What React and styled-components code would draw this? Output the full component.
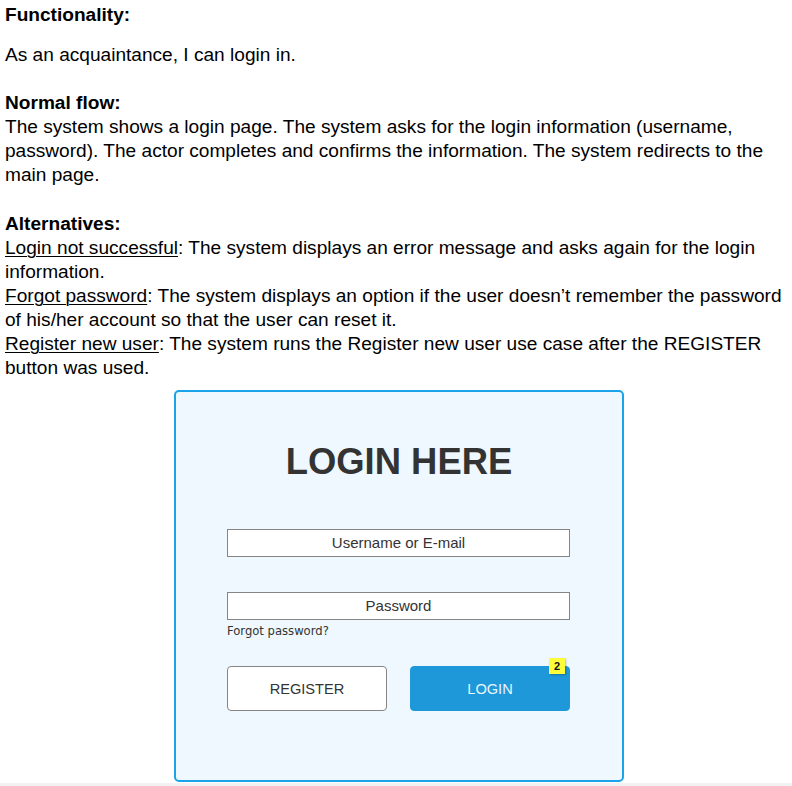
import React from "react";
import styled, { createGlobalStyle } from "styled-components";

const Global = createGlobalStyle`
  html, body { margin: 0; padding: 0; background: #fff; }
  body { font-family: "Liberation Sans", Arial, sans-serif; color: #000; }
`;

const Page = styled.div`
  width: 792px;
  height: 786px;
  display: flex;
  flex-direction: column;
  overflow: hidden;
`;

const Content = styled.div`
  padding: 3px 8px 0 5px;
  font-size: 19.1px;
  line-height: 24px;
`;

const Heading = styled.div`
  font-weight: bold;
  margin-top: ${(p) => p.$mt || 0}px;
`;

const Para = styled.div`
  margin-top: ${(p) => p.$mt || 0}px;
`;

const U = styled.span`
  text-decoration: underline;
  text-underline-offset: 2px;
  text-decoration-thickness: 1px;
`;

const CardWrap = styled.div`
  display: flex;
  padding-left: 169px;
  margin-top: 10px;
`;

const Card = styled.div`
  width: 450px;
  height: 392px;
  box-sizing: border-box;
  border: 2px solid #1aa3e8;
  border-radius: 5px;
  background: #eef8fe;
  display: flex;
  flex-direction: column;
  align-items: center;
  padding-top: 48px;
`;

const Title = styled.div`
  font-size: 36.4px;
  line-height: 44px;
  font-weight: bold;
  color: #333;
`;

const Form = styled.div`
  width: 343px;
  display: flex;
  flex-direction: column;
  margin-top: 45px;
  margin-left: -1px;
`;

const Field = styled.div`
  height: 28px;
  box-sizing: border-box;
  border: 1px solid #858585;
  background: #fff;
  display: flex;
  align-items: center;
  justify-content: center;
  font-size: 15px;
  color: #333;
  margin-top: ${(p) => p.$mt || 0}px;
`;

const Forgot = styled.div`
  font-family: "DejaVu Sans", Verdana, sans-serif;
  font-size: 11.6px;
  line-height: 15px;
  color: #333;
  margin-top: 4px;
`;

const Buttons = styled.div`
  display: flex;
  justify-content: space-between;
  margin-top: 27px;
`;

const Button = styled.div`
  position: relative;
  width: 160px;
  height: 45px;
  box-sizing: border-box;
  border-radius: 4px;
  display: flex;
  align-items: center;
  justify-content: center;
  font-size: 14.6px;
  border: 1px solid ${(p) => (p.$primary ? "#1e98d9" : "#858585")};
  background: ${(p) => (p.$primary ? "#1e98d9" : "#fff")};
  color: ${(p) => (p.$primary ? "#eaf6fd" : "#333")};
`;

const Badge = styled.div`
  position: absolute;
  top: -9px;
  right: 4px;
  width: 16px;
  height: 16px;
  background: #fdfd3a;
  color: #111;
  font-size: 11px;
  font-weight: bold;
  display: flex;
  align-items: center;
  justify-content: center;
  box-shadow: 1px 1px 2px rgba(0, 0, 0, 0.25);
`;

const Footer = styled.div`
  margin-top: auto;
  height: 3px;
  background: #f2f2f2;
`;

export default function App() {
  return (
    <>
      <Global />
      <Page>
        <Content>
          <Heading>Functionality:</Heading>
          <Para $mt={16}>As an acquaintance, I can login in.</Para>
          <Heading $mt={24}>Normal flow:</Heading>
          <Para>
            The system shows a login page. The system asks for the login information (username,
            password). The actor completes and confirms the information. The system redirects to the
            main page.
          </Para>
          <Heading $mt={25}>Alternatives:</Heading>
          <Para>
            <U>Login not successful</U>: The system displays an error message and asks again for the
            login information.
          </Para>
          <Para>
            <U>Forgot password</U>: The system displays an option if the user doesn’t remember the
            password of his/her account so that the user can reset it.
          </Para>
          <Para>
            <U>Register new user</U>: The system runs the Register new user use case after the
            REGISTER button was used.
          </Para>
          <CardWrap>
            <Card>
              <Title>LOGIN HERE</Title>
              <Form>
                <Field>Username or E-mail</Field>
                <Field $mt={35}>Password</Field>
                <Forgot>Forgot password?</Forgot>
                <Buttons>
                  <Button>REGISTER</Button>
                  <Button $primary>
                    LOGIN
                    <Badge>2</Badge>
                  </Button>
                </Buttons>
              </Form>
            </Card>
          </CardWrap>
        </Content>
        <Footer />
      </Page>
    </>
  );
}
